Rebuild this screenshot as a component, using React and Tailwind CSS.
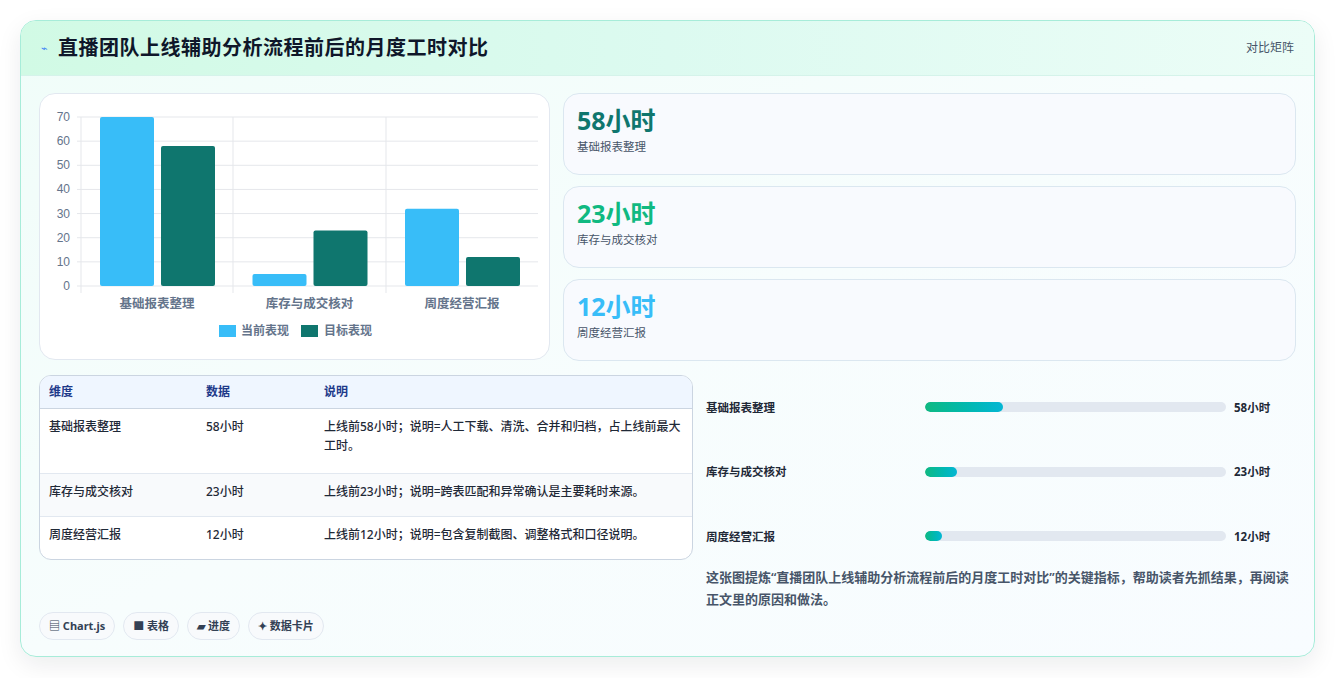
import React from "react";

const F = { fontFamily: '"Noto Sans","Noto Sans CJK SC",sans-serif' };

function Chart() {
  const y = (v) => 285 - v * (169 / 70);
  const data = [
    [70, 58],
    [5, 23],
    [32, 12],
  ];
  return (
    <svg width="510" height="266" viewBox="39 93 510 266" className="block">
      {[0, 10, 20, 30, 40, 50, 60, 70].map((v) => (
        <g key={v}>
          <line x1="76" x2="537" y1={y(v)} y2={y(v)} stroke="#e5e7eb" />
          <text x="69" y={y(v) + 4} textAnchor="end" fontSize="12" fill="#64748b" fontFamily="Liberation Sans, sans-serif">{v}</text>
        </g>
      ))}
      {[80, 232, 385].map((x) => (
        <line key={x} x1={x} x2={x} y1="116" y2="292" stroke="#e5e7eb" />
      ))}
      {data.map(([a, b], i) => {
        const x0 = 99 + i * 152.5;
        return (
          <g key={i}>
            <rect x={x0} y={y(a)} width="54" height={285 - y(a)} rx="2" fill="#38bdf8" />
            <rect x={x0 + 61} y={y(b)} width="54" height={285 - y(b)} rx="2" fill="#0f766e" />
          </g>
        );
      })}
      {["基础报表整理", "库存与成交核对", "周度经营汇报"].map((t, i) => (
        <text key={t} x={156 + i * 152.5} y="307" textAnchor="middle" fontSize="12.5" fill="#64748b" fontWeight="600" fontFamily="Noto Sans CJK SC, sans-serif">{t}</text>
      ))}
      <rect x="218" y="324" width="17" height="12" fill="#38bdf8" />
      <text x="240" y="334" fontSize="12" fill="#64748b" fontWeight="600" fontFamily="Noto Sans CJK SC, sans-serif">当前表现</text>
      <rect x="300" y="324" width="17" height="12" fill="#0f766e" />
      <text x="323" y="334" fontSize="12" fill="#64748b" fontWeight="600" fontFamily="Noto Sans CJK SC, sans-serif">目标表现</text>
    </svg>
  );
}

const kpis = [
  ["58小时", "基础报表整理", "text-[#0f766e]"],
  ["23小时", "库存与成交核对", "text-[#10b981]"],
  ["12小时", "周度经营汇报", "text-[#38bdf8]"],
];

const rows = [
  ["基础报表整理", "58小时", "上线前58小时；说明=人工下载、清洗、合并和归档，占上线前最大工时。", "h-[65px]"],
  ["库存与成交核对", "23小时", "上线前23小时；说明=跨表匹配和异常确认是主要耗时来源。", "h-[43px]"],
  ["周度经营汇报", "12小时", "上线前12小时；说明=包含复制截图、调整格式和口径说明。", "h-[42px]"],
];

const bars = [
  ["基础报表整理", "58小时", 26],
  ["库存与成交核对", "23小时", 10.5],
  ["周度经营汇报", "12小时", 5.5],
];

export default function App() {
  return (
    <div style={F} className="w-[1336px] h-[678px] bg-white pt-5 pl-5">
      <div className="w-[1295px] h-[637px] rounded-2xl border border-[#a7ecd9] bg-gradient-to-br from-[#f0fdf9] via-[#f7fdfd] to-[#f8fcff] shadow-[0_8px_24px_rgba(15,23,42,0.08)] overflow-hidden flex flex-col">
        <div className="h-[55px] shrink-0 flex items-center justify-between px-5 bg-gradient-to-r from-[#d1fae5] via-[#dcfaf0] to-[#ecfdf7] border-b border-[#d5f3ea]">
          <div className="flex items-center gap-2.5">
            <span className="text-[#3b82f6] text-[11px]">⌁</span>
            <span className="text-[20px] font-bold text-[#0f172a] tracking-[0.5px]">直播团队上线辅助分析流程前后的月度工时对比</span>
          </div>
          <span className="text-[12px] text-[#475569]">对比矩阵</span>
        </div>
        <div className="px-[18px] pt-[17px] flex flex-col">
          <div className="flex gap-[13px]">
            <div className="w-[511px] h-[267px] bg-white rounded-2xl border border-[#e2e8f0]">
              <Chart />
            </div>
            <div className="flex-1 flex flex-col gap-[11px]">
              {kpis.map(([v, l, c]) => (
                <div key={l} className="h-[82px] rounded-2xl border border-[#dbe7f0] bg-[#f8fafe] px-[13px] pt-[9px]">
                  <div className={`text-[25px] font-bold leading-[34px] ${c}`}>{v}</div>
                  <div className="text-[11.5px] text-[#475569] mt-[1px]">{l}</div>
                </div>
              ))}
            </div>
          </div>
          <div className="flex gap-[13px] mt-[14px]">
            <div className="w-[654px] flex flex-col">
              <div className="rounded-xl border border-[#cbd5e1] overflow-hidden bg-white text-[12px] font-medium">
                <div className="flex h-[33px] items-center bg-[#eff6ff] border-b border-[#cbd5e1] text-[#1e3a8a] font-bold">
                  <div className="w-[166px] pl-[9px]">维度</div>
                  <div className="w-[118px]">数据</div>
                  <div className="flex-1">说明</div>
                </div>
                {rows.map(([a, b, c, h], i) => (
                  <div key={a} className={`flex ${h} pt-[8px] text-[#1f2937] leading-[19px] ${i === 1 ? "bg-[#f8fafc]" : ""} ${i < 2 ? "border-b border-[#e2e8f0]" : ""}`}>
                    <div className="w-[166px] pl-[9px]">{a}</div>
                    <div className="w-[118px]">{b}</div>
                    <div className="flex-1 pr-2">{c}</div>
                  </div>
                ))}
              </div>
              <div className="flex gap-2 mt-[52px] text-[11px] font-bold text-[#334155]">
                {["▤ Chart.js", "■ 表格", "▰ 进度", "✦ 数据卡片"].map((t) => (
                  <div key={t} className="h-[28px] px-[9px] flex items-center rounded-full border border-[#e2e8f0] bg-[#f8fafc]">{t}</div>
                ))}
              </div>
            </div>
            <div className="flex-1 flex flex-col">
              {bars.map(([l, v, p]) => (
                <div key={l} className="h-[64.5px] flex items-center text-[11.5px] font-semibold text-[#1f2937]">
                  <div className="w-[219px]">{l}</div>
                  <div className="w-[301px] h-[10px] rounded-full bg-[#e2e8f0] overflow-hidden">
                    <div className="h-full rounded-full bg-gradient-to-r from-[#10b981] to-[#06b6d4]" style={{ width: `${p}%` }} />
                  </div>
                  <div className="ml-[8px] font-bold">{v}</div>
                </div>
              ))}
              <p className="mt-[-3px] text-[13px] leading-[22px] text-[#475569] font-semibold pr-[2px]">
                这张图提炼“直播团队上线辅助分析流程前后的月度工时对比”的关键指标，帮助读者先抓结果，再阅读正文里的原因和做法。
              </p>
            </div>
          </div>
        </div>
      </div>
    </div>
  );
}
